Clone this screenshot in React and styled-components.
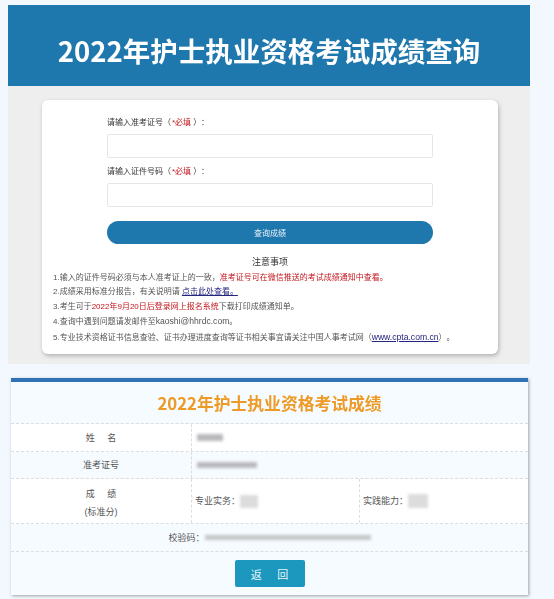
import React from "react";
import styled, { createGlobalStyle } from "styled-components";

const Global = createGlobalStyle`
  html, body { margin: 0; padding: 0; background: #f3f8fe; }
  body { width: 554px; height: 599px; overflow: hidden; font-family: "Liberation Sans", "Noto Sans CJK SC", sans-serif; text-spacing-trim: space-all; }
`;

const Page = styled.div`
  display: flex;
  flex-direction: column;
  padding: 5px 24px 0 8px;
  height: 594px;
`;
const QueryPanel = styled.section`
  display: flex;
  flex-direction: column;
  height: 359px;
  background: #eeeeee;
`;
const Banner = styled.header`
  height: 81px;
  display: flex;
  align-items: center;
  justify-content: center;
  background: #1f78ad;
  color: #fff;
  font-family: "Noto Sans CJK SC", sans-serif;
  font-size: 27.5px;
  font-weight: 700;
  padding-top: 9px;
  box-sizing: border-box;
  filter: blur(.3px);
`;
const Card = styled.div`
  margin: 14px 32px 0 34px;
  height: 254px;
  box-sizing: border-box;
  background: #fff;
  border-radius: 6px;
  box-shadow: 1px 2px 4px rgba(0,0,0,.25);
  padding: 17px 11px 0 11px;
  display: flex;
  flex-direction: column;
`;
const Form = styled.div`
  display: flex;
  flex-direction: column;
  margin: 0 54px;
`;
const Label = styled.div`
  font-size: 8px;
  line-height: 12px;
  height: 12px;
  color: #333;
  margin-bottom: 5px;
  filter: blur(.25px);
  em { color: #c4161c; font-style: normal; margin: 0 2px 0 1px; }
`;
const Field = styled.div`
  height: 24px;
  box-sizing: border-box;
  border: 1px solid #e6e6e6;
  border-radius: 2px;
  background: #fff;
  margin-bottom: 8px;
`;
const Submit = styled.div`
  height: 23px;
  margin-top: 6px;
  border-radius: 12px;
  background: #1f78ad;
  color: #e8f3f9;
  font-size: 8px;
  display: flex;
  align-items: center;
  justify-content: center;
  filter: blur(.2px);
`;
const NoticeTitle = styled.div`
  text-align: center;
  font-size: 9px;
  line-height: 14px;
  margin: 11px 0 2px;
  color: #333;
  filter: blur(.2px);
`;
const Notice = styled.p`
  margin: 0;
  font-size: 8px;
  line-height: 14.4px;
  white-space: nowrap;
  color: #555;
  filter: blur(.25px);
  b { color: #c4161c; font-weight: 400; }
  a { color: #25257f; text-decoration: underline; }
`;
const Latin = styled.span`
  font-size: 8.6px;
`;
const ResultCard = styled.section`
  margin: 14px 2px 0 3px;
  height: 217px;
  box-sizing: border-box;
  border-top: 4px solid #2f72b5;
  background: #f6fbff;
  box-shadow: 1px 1px 3px rgba(0,0,0,.35);
  display: flex;
  flex-direction: column;
`;
const ResultTitle = styled.h2`
  margin: 0;
  height: 42px;
  display: flex;
  align-items: center;
  justify-content: center;
  font-family: "Noto Sans CJK SC", sans-serif;
  font-size: 16.8px;
  font-weight: 700;
  color: #ee9a26;
  border-bottom: 1px dashed #ddd;
  box-sizing: border-box;
  filter: blur(.25px);
`;
const Row = styled.div`
  display: grid;
  grid-template-columns: ${p => p.$cols || "181px 1fr"};
  height: ${p => p.$h}px;
  box-sizing: border-box;
  border-bottom: 1px dashed #ddd;
  background: ${p => p.$bg || "#fff"};
`;
const Cell = styled.div`
  display: flex;
  flex-direction: ${p => p.$col ? "column" : "row"};
  align-items: center;
  justify-content: ${p => p.$center ? "center" : "flex-start"};
  padding-left: ${p => p.$center ? 0 : 3}px;
  padding-top: ${p => p.$col ? 3 : 0}px;
  font-size: 9px;
  line-height: 18px;
  color: #555;
  border-right: ${p => p.$last ? "none" : "1px dashed #ddd"};
  white-space: pre;
`;
const Blurred = styled.span`
  display: inline-block;
  width: ${p => p.$w}px;
  height: ${p => p.$h}px;
  margin-left: ${p => p.$ml || 0}px;
  background: ${p => p.$c || "#b9b9bd"};
  filter: blur(1.4px);
`;
const Footer = styled.div`
  flex: 1;
  display: flex;
  align-items: center;
  justify-content: center;
`;
const BackBtn = styled.div`
  width: 70px;
  height: 27px;
  border-radius: 2px;
  background: #1c98bf;
  color: #e8f6fa;
  font-size: 11px;
  display: flex;
  align-items: center;
  justify-content: center;
  white-space: pre;
`;

export default function App() {
  return (
    <Page>
      <Global />
      <QueryPanel>
        <Banner>2022年护士执业资格考试成绩查询</Banner>
        <Card>
          <Form>
            <Label>请输入准考证号（<em>*必填</em>）：</Label>
            <Field />
            <Label>请输入证件号码（<em>*必填</em>）：</Label>
            <Field />
            <Submit>查询成绩</Submit>
          </Form>
          <NoticeTitle>注意事项</NoticeTitle>
          <Notice>1.输入的证件号码必须与本人准考证上的一致，<b>准考证号可在微信推送的考试成绩通知中查看。</b></Notice>
          <Notice>2.成绩采用标准分报告，有关说明请 <a>点击此处查看。</a></Notice>
          <Notice>3.考生可于<b>2022年9月20日后登录网上报名系统</b>下载打印成绩通知单。</Notice>
          <Notice>4.查询中遇到问题请发邮件至<Latin>kaoshi@hhrdc.com</Latin>。</Notice>
          <Notice>5.专业技术资格证书信息查验、证书办理进度查询等证书相关事宜请关注中国人事考试网（<a><Latin>www.cpta.com.cn</Latin></a>）。</Notice>
        </Card>
      </QueryPanel>
      <ResultCard>
        <ResultTitle>2022年护士执业资格考试成绩</ResultTitle>
        <Row $h={28}>
          <Cell $center>姓     名</Cell>
          <Cell $last><Blurred $w={26} $h={7} $ml={2} /></Cell>
        </Row>
        <Row $h={27} $bg="#f6fbff">
          <Cell $center>准考证号</Cell>
          <Cell $last><Blurred $w={60} $h={6} $ml={2} /></Cell>
        </Row>
        <Row $h={45} $cols="181px 168px 1fr">
          <Cell $center $col>
            <span>成     绩</span>
            <span>(标准分)</span>
          </Cell>
          <Cell>专业实务：<Blurred $w={18} $h={13} $c="#dcdcdc" /></Cell>
          <Cell $last>实践能力：<Blurred $w={20} $h={14} $c="#dcdcdc" /></Cell>
        </Row>
        <Row $h={28} $cols="1fr" $bg="#f6fbff">
          <Cell $center $last>校验码：<Blurred $w={166} $h={5} $c="#c4c6c8" /></Cell>
        </Row>
        <Footer><BackBtn>返     回</BackBtn></Footer>
      </ResultCard>
    </Page>
  );
}
